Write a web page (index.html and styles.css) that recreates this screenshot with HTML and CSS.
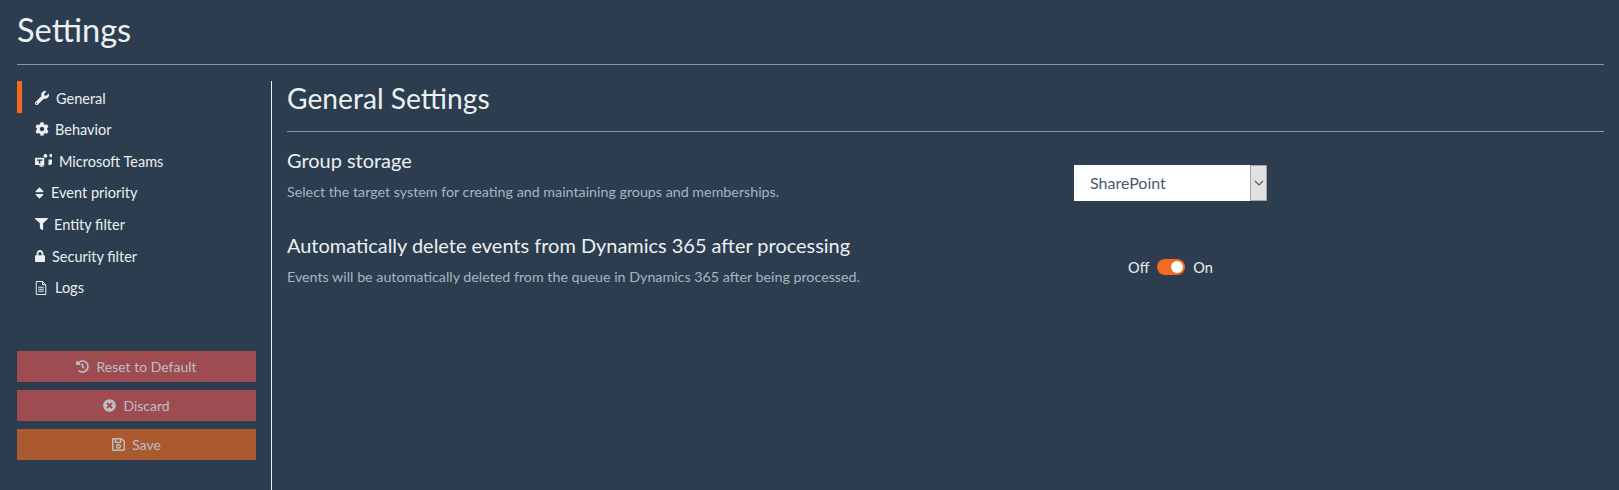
FILE: index.html
```html
<!DOCTYPE html>
<html lang="en">
<head>
<meta charset="utf-8">
<title>Settings</title>
<link rel="stylesheet" href="styles.css">
</head>
<body>
<div class="page">
  <h1 class="page-title">Settings</h1>
  <div class="main">
    <aside class="sidebar">
      <nav class="nav">
        <a class="nav-item active"><svg class="ic ic-wrench" viewBox="0 0 512 512"><path d="M507.73 109.1c-2.24-9.03-13.54-12.09-20.12-5.51l-74.36 74.36-67.88-11.31-11.31-67.88 74.36-74.36c6.62-6.62 3.43-17.9-5.66-20.16-47.38-11.74-99.55.91-136.58 37.93-39.64 39.64-50.55 97.1-34.05 147.2L18.74 402.76c-24.99 24.99-24.99 65.51 0 90.5 24.99 24.99 65.51 24.99 90.5 0l213.21-213.21c50.12 16.71 107.47 5.68 147.37-34.22 37.07-37.07 49.7-89.32 37.91-136.73zM64 472c-13.25 0-24-10.75-24-24 0-13.26 10.75-24 24-24s24 10.74 24 24c0 13.25-10.75 24-24 24z"/></svg><span>General</span></a>
        <a class="nav-item"><svg class="ic ic-cog" viewBox="0 0 512 512"><path d="M487.4 315.7l-42.6-24.6c4.3-23.2 4.3-47 0-70.2l42.6-24.6c4.9-2.8 7.1-8.6 5.5-14-11.1-35.6-30-67.8-54.7-94.6-3.8-4.1-10-5.1-14.8-2.3L380.8 110c-17.9-15.4-38.5-27.3-60.8-35.1V25.8c0-5.6-3.9-10.5-9.4-11.7-36.7-8.2-74.3-7.8-109.2 0-5.5 1.2-9.4 6.1-9.4 11.7V75c-22.2 7.9-42.8 19.8-60.8 35.1L88.7 85.5c-4.9-2.8-11-1.9-14.8 2.3-24.7 26.7-43.6 58.9-54.7 94.6-1.7 5.4.6 11.2 5.5 14L67.3 221c-4.3 23.2-4.3 47 0 70.2l-42.6 24.6c-4.9 2.8-7.1 8.6-5.5 14 11.1 35.6 30 67.8 54.7 94.6 3.8 4.1 10 5.1 14.8 2.3l42.6-24.6c17.9 15.4 38.5 27.3 60.8 35.1v49.2c0 5.6 3.9 10.5 9.4 11.7 36.7 8.2 74.3 7.8 109.2 0 5.5-1.2 9.4-6.1 9.4-11.7v-49.2c22.2-7.9 42.8-19.8 60.8-35.1l42.6 24.6c4.9 2.8 11 1.9 14.8-2.3 24.7-26.7 43.6-58.9 54.7-94.6 1.5-5.5-.7-11.3-5.6-14.1zM256 336c-44.1 0-80-35.9-80-80s35.9-80 80-80 80 35.9 80 80-35.9 80-80 80z"/></svg><span>Behavior</span></a>
        <a class="nav-item"><svg class="ic ic-teams" viewBox="0 0 640 512"><path fill-rule="evenodd" d="M24 130h300c14 0 24 10 24 24v230c0 14-10 24-24 24H24c-14 0-24-10-24-24V154c0-14 10-24 24-24zM70 200v50h75v100h58V250h75v-50zM320 60a72 72 0 1 1 0 .1zM540 50a62 62 0 1 1 0 .1zM385 195h240c8 0 15 6 15 14v110c0 58-42 90-88 90-18 0-36-5-52-14 6-20 9-40 9-62V195zM380 195v150c0 75-50 135-120 135-50 0-90-25-108-62h178c28 0 50-22 50-50z"/></svg><span>Microsoft Teams</span></a>
        <a class="nav-item"><svg class="ic ic-sort" viewBox="0 0 320 512"><path d="M41 288h238c21.4 0 32.1 25.9 17 41L177 448c-9.4 9.4-24.6 9.4-33.9 0L24 329c-15.1-15.1-4.4-41 17-41zm255-105L177 64c-9.4-9.4-24.6-9.4-33.9 0L24 183c-15.1 15.1-4.4 41 17 41h238c21.4 0 32.1-25.9 17-41z"/></svg><span>Event priority</span></a>
        <a class="nav-item"><svg class="ic ic-filter" viewBox="0 0 512 512" preserveAspectRatio="none"><path d="M487.976 0H24.028C2.71 0-8.047 25.866 7.058 40.971L192 225.941V432c0 7.831 3.821 15.17 10.237 19.662l80 55.98C298.02 518.69 320 507.493 320 487.98V225.941l184.947-184.97C520.021 25.896 509.338 0 487.976 0z"/></svg><span>Entity filter</span></a>
        <a class="nav-item"><svg class="ic ic-lock" viewBox="0 0 448 512" preserveAspectRatio="none"><path d="M400 224h-24v-72C376 68.2 307.8 0 224 0S72 68.2 72 152v72H48c-26.5 0-48 21.5-48 48v192c0 26.5 21.5 48 48 48h352c26.5 0 48-21.5 48-48V272c0-26.5-21.5-48-48-48zm-104 0H152v-72c0-39.7 32.3-72 72-72s72 32.3 72 72v72z"/></svg><span>Security filter</span></a>
        <a class="nav-item"><svg class="ic ic-file" viewBox="0 0 24 28"><path d="M2.5 1H15l6.5 6.5V27h-19zM15 1v6.5h6.5" fill="none" stroke="#ecf0f1" stroke-width="2"/><path d="M6.5 12.5h11M6.5 16.5h11M6.5 20.5h11" fill="none" stroke="#ecf0f1" stroke-width="2"/></svg><span>Logs</span></a>
      </nav>
      <div class="actions">
        <button class="btn btn-danger"><svg class="btn-ic" viewBox="0 0 512 512"><path d="M504 255.531c.253 136.64-111.18 248.372-247.82 248.468-59.015.042-113.223-20.53-155.822-54.911-11.077-8.94-11.905-25.541-1.839-35.607l11.267-11.267c8.609-8.609 22.353-9.551 31.891-1.984C173.062 425.135 212.781 440 256 440c101.705 0 184-82.311 184-184 0-101.705-82.311-184-184-184-48.814 0-93.149 18.969-126.068 49.932l50.754 50.754c10.08 10.08 2.941 27.314-11.313 27.314H24c-8.837 0-16-7.163-16-16V38.627c0-14.254 17.234-21.393 27.314-11.314l49.372 49.372C129.209 34.136 189.552 8 256 8c136.81 0 247.747 110.78 248 247.531zm-180.912 78.784l9.823-12.63c8.138-10.463 6.253-25.542-4.21-33.679L288 256.349V152c0-13.255-10.745-24-24-24h-16c-13.255 0-24 10.745-24 24v135.651l65.409 50.874c10.463 8.137 25.541 6.253 33.679-4.21z"/></svg><span>Reset to Default</span></button>
        <button class="btn btn-danger"><svg class="btn-ic" viewBox="0 0 512 512"><path d="M256 8C119 8 8 119 8 256s111 248 248 248 248-111 248-248S393 8 256 8zm121.6 313.1c4.7 4.7 4.7 12.3 0 17L338 377.6c-4.7 4.7-12.3 4.7-17 0L256 312l-65.1 65.6c-4.7 4.7-12.3 4.7-17 0L134.4 338c-4.7-4.7-4.7-12.3 0-17l65.6-65-65.6-65.1c-4.7-4.7-4.7-12.3 0-17l39.6-39.6c4.7-4.7 12.3-4.7 17 0l65 65.7 65.1-65.6c4.7-4.7 12.3-4.7 17 0l39.6 39.6c4.7 4.7 4.7 12.3 0 17L312 256l65.6 65.1z"/></svg><span>Discard</span></button>
        <button class="btn btn-save"><svg class="btn-ic btn-ic-save" viewBox="0 0 448 512"><path d="M433.941 129.941l-83.882-83.882A48 48 0 0 0 316.118 32H48C21.49 32 0 53.49 0 80v352c0 26.51 21.49 48 48 48h352c26.51 0 48-21.49 48-48V163.882a48 48 0 0 0-14.059-33.941zM272 80v80H144V80h128zm122 352H54a6 6 0 0 1-6-6V86a6 6 0 0 1 6-6h42v104c0 13.255 10.745 24 24 24h176c13.255 0 24-10.745 24-24V83.882l78.243 78.243a6 6 0 0 1 1.757 4.243V426a6 6 0 0 1-6 6zM224 232c-48.523 0-88 39.477-88 88s39.477 88 88 88 88-39.477 88-88-39.477-88-88-88zm0 128c-22.056 0-40-17.944-40-40s17.944-40 40-40 40 17.944 40 40-17.944 40-40 40z"/></svg><span>Save</span></button>
      </div>
    </aside>
    <main class="content">
      <h2 class="section-title">General Settings</h2>
      <section class="setting setting-first">
        <div class="setting-text">
          <h3 class="setting-title">Group storage</h3>
          <p class="setting-desc">Select the target system for creating and maintaining groups and memberships.</p>
        </div>
        <div class="setting-control">
          <div class="select">
            <span class="select-value">SharePoint</span>
            <span class="select-arrow"><svg viewBox="0 0 10 6" width="10" height="6"><path d="M1 1l4 4 4-4" fill="none" stroke="#555" stroke-width="1.1"/></svg></span>
          </div>
        </div>
      </section>
      <section class="setting setting-second">
        <div class="setting-text">
          <h3 class="setting-title">Automatically delete events from Dynamics 365 after processing</h3>
          <p class="setting-desc">Events will be automatically deleted from the queue in Dynamics 365 after being processed.</p>
        </div>
        <div class="setting-control">
          <div class="toggle-row"><span>Off</span><span class="toggle"><span class="knob"></span></span><span>On</span></div>
        </div>
      </section>
    </main>
  </div>
</div>
</body>
</html>
```

FILE: styles.css
```css
* { box-sizing: border-box; }
html, body { margin: 0; height: 100%; }
body {
  background: #2b3d4f;
  color: #ecf0f1;
  font-family: "Lato", "Liberation Sans", sans-serif;
  overflow: hidden;
}
.page { height: 490px; padding: 0 15px 0 17px; display: flex; flex-direction: column; }
.page-title {
  margin: 0;
  height: 65px;
  padding-top: 9px;
  font-size: 32.6px;
  line-height: 42px;
  font-weight: 400;
  border-bottom: 1px solid #8d959e;
}
.main { flex: 1; display: flex; margin-top: 16px; min-height: 0; }
.sidebar { width: 255px; flex: none; border-right: 1px solid #ecf0f1; }
.nav { display: flex; flex-direction: column; height: 269px; }
.nav-item {
  display: flex;
  align-items: center;
  height: 31.7px;
  padding-left: 13px;
  padding-top: 1px;
  font-size: 14.5px;
  color: #ecf0f1;
  border-left: 5px solid transparent;
}
.nav-item.active { border-left-color: #f36a21; height: 32px; padding-top: 2px; }
.ic { fill: #ecf0f1; display: block; height: 14px; flex: none; }
.ic-wrench { width: 14px; margin-right: 7px; }
.ic-cog { width: 14px; margin-right: 6px; }
.ic-teams { width: 17px; margin-right: 7px; }
.ic-sort { width: 9px; margin-right: 7px; }
.ic-filter { width: 13px; height: 12px; margin-right: 6px; }
.ic-lock { width: 10px; height: 12px; margin-right: 7px; }
.ic-file { width: 12px; height: 14px; margin-right: 8px; }
.actions { display: flex; flex-direction: column; gap: 8px; width: 239px; margin-top: 1px; }
.btn {
  height: 31px;
  border: 0;
  padding: 0;
  display: flex;
  align-items: center;
  justify-content: center;
  gap: 7px;
  font: 400 14px "Lato", "Liberation Sans", sans-serif;
  color: #bcbfc9;
}
.btn-danger { background: #9e4c52; }
.btn-save { background: #ab5a2f; }
.btn-ic { width: 13px; height: 13px; fill: #bcbfc9; display: block; flex: none; }
.btn-ic-save { height: 15px; }
.content { flex: 1; padding-left: 15px; min-width: 0; }
.section-title {
  margin: 0;
  height: 51px;
  font-size: 28.2px;
  line-height: 35px;
  font-weight: 400;
  border-bottom: 1px solid #8d959e;
}
.setting { display: flex; }
.setting-first { margin-top: 15px; height: 85px; }
.setting-second { height: 60px; }
.setting-text { width: 787px; flex: none; }
.setting-title { margin: 0; font-size: 19.95px; line-height: 26px; font-weight: 400; }
.setting-desc { margin: 10px 0 0; font-size: 14.28px; line-height: 18px; color: #aab4c0; }
.setting-control { width: 193px; flex: none; }
.select {
  display: flex;
  width: 193px;
  height: 36px;
  background: #fff;
  margin-top: 18px;
  align-items: stretch;
}
.select-value { flex: 1; padding-left: 16px; font-size: 16px; line-height: 36px; color: #495a6c; }
.select-arrow {
  width: 17px;
  background: #e1e1e1;
  border: 1px solid #a6a6a6;
  display: flex;
  align-items: center;
  justify-content: center;
}
.toggle-row { display: flex; align-items: center; justify-content: center; gap: 8px; font-size: 14.5px; height: 18px; margin-top: 26px; }
.toggle {
  display: flex;
  justify-content: flex-end;
  align-items: center;
  width: 28px;
  height: 16px;
  border-radius: 8px;
  background: #f36a21;
  padding-right: 2px;
}
.knob { width: 12px; height: 12px; border-radius: 50%; background: #fff; display: block; }
```
